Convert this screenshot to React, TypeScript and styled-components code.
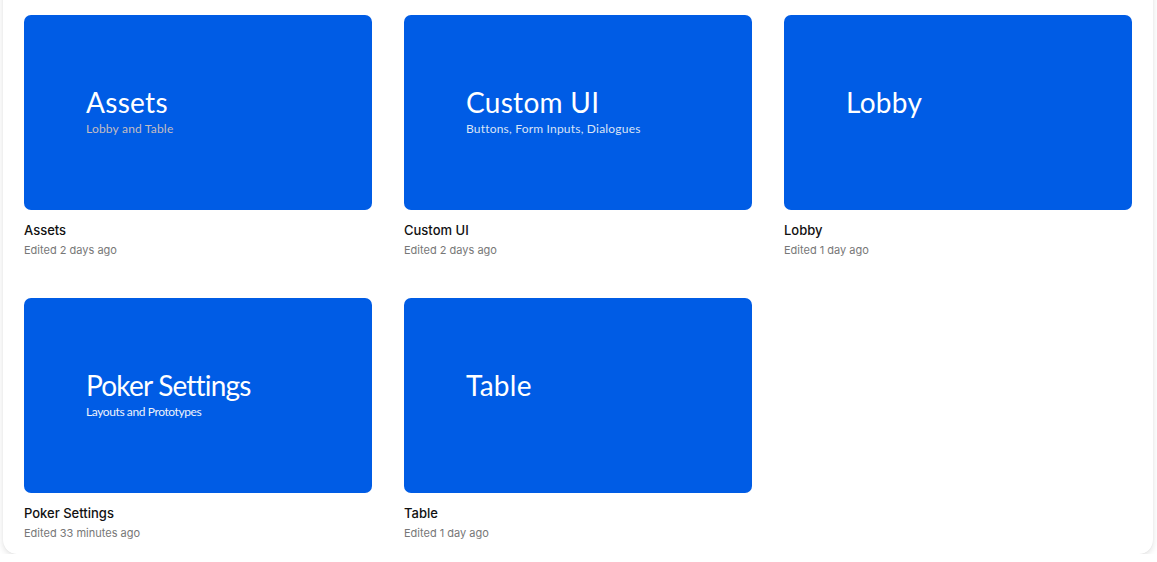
import React from 'react';
import styled, { createGlobalStyle } from 'styled-components';

const GlobalStyle = createGlobalStyle`
    html, body {
        margin: 0;
        padding: 0;
        background: #ffffff;
        overflow: hidden;
    }
    body {
        font-family: Inter, "Liberation Sans", sans-serif;
    }
`;

const Panel = styled.div`
    margin: -20px 4px 0 3px;
    padding: 35px 21px 11px;
    background: #ffffff;
    border-radius: 14px;
    box-shadow: 0 2px 6px rgba(0, 0, 0, 0.12), 0 0 1px rgba(0, 0, 0, 0.08);
`;

const Grid = styled.div`
    display: grid;
    grid-template-columns: repeat(3, 348px);
    column-gap: 32px;
    row-gap: 38px;
`;

const Item = styled.div`
    display: flex;
    flex-direction: column;
    cursor: pointer;
`;

const Thumb = styled.div`
    height: 195px;
    background: #005ce5;
    border-radius: 7px;
    padding: 70px 0 0 62px;
    box-sizing: border-box;
    color: #ffffff;
    font-family: Lato, "Noto Sans", sans-serif;
`;

const ThumbTitle = styled.div<{ $tight?: boolean }>`
    font-size: 28px;
    line-height: 34px;
    font-weight: 400;
    letter-spacing: ${p => (p.$tight ? '-0.8px' : '0.3px')};
`;

const ThumbSub = styled.div<{ $tone: string; $tight?: boolean }>`
    font-size: 12px;
    line-height: 16px;
    margin-top: 2px;
    color: ${p => p.$tone};
    letter-spacing: ${p => (p.$tight ? '-0.4px' : '0.2px')};
`;

const Name = styled.div`
    margin-top: 10px;
    font-size: 13px;
    line-height: 20px;
    font-weight: 500;
    color: #111111;
`;

const Edited = styled.div`
    font-size: 11px;
    line-height: 20px;
    color: #777777;
`;

type File = {
    name: string;
    sub?: string;
    tone?: string;
    tight?: boolean;
    edited: string;
};

const files: File[] = [
    { name: 'Assets', sub: 'Lobby and Table', tone: '#c3bcc2', edited: 'Edited 2 days ago' },
    { name: 'Custom UI', sub: 'Buttons, Form Inputs, Dialogues', tone: '#d9e3f6', edited: 'Edited 2 days ago' },
    { name: 'Lobby', edited: 'Edited 1 day ago' },
    { name: 'Poker Settings', sub: 'Layouts and Prototypes', tone: '#eef3fc', tight: true, edited: 'Edited 33 minutes ago' },
    { name: 'Table', edited: 'Edited 1 day ago' },
];

const App: React.FC = () => {
    return (
        <>
            <GlobalStyle />
            <Panel>
                <Grid>
                    {files.map(f => (
                        <Item key={f.name}>
                            <Thumb>
                                <ThumbTitle $tight={f.tight}>{f.name}</ThumbTitle>
                                {f.sub && (
                                    <ThumbSub $tone={f.tone || '#fff'} $tight={f.tight}>
                                        {f.sub}
                                    </ThumbSub>
                                )}
                            </Thumb>
                            <Name>{f.name}</Name>
                            <Edited>{f.edited}</Edited>
                        </Item>
                    ))}
                </Grid>
            </Panel>
        </>
    );
};

export default App;
